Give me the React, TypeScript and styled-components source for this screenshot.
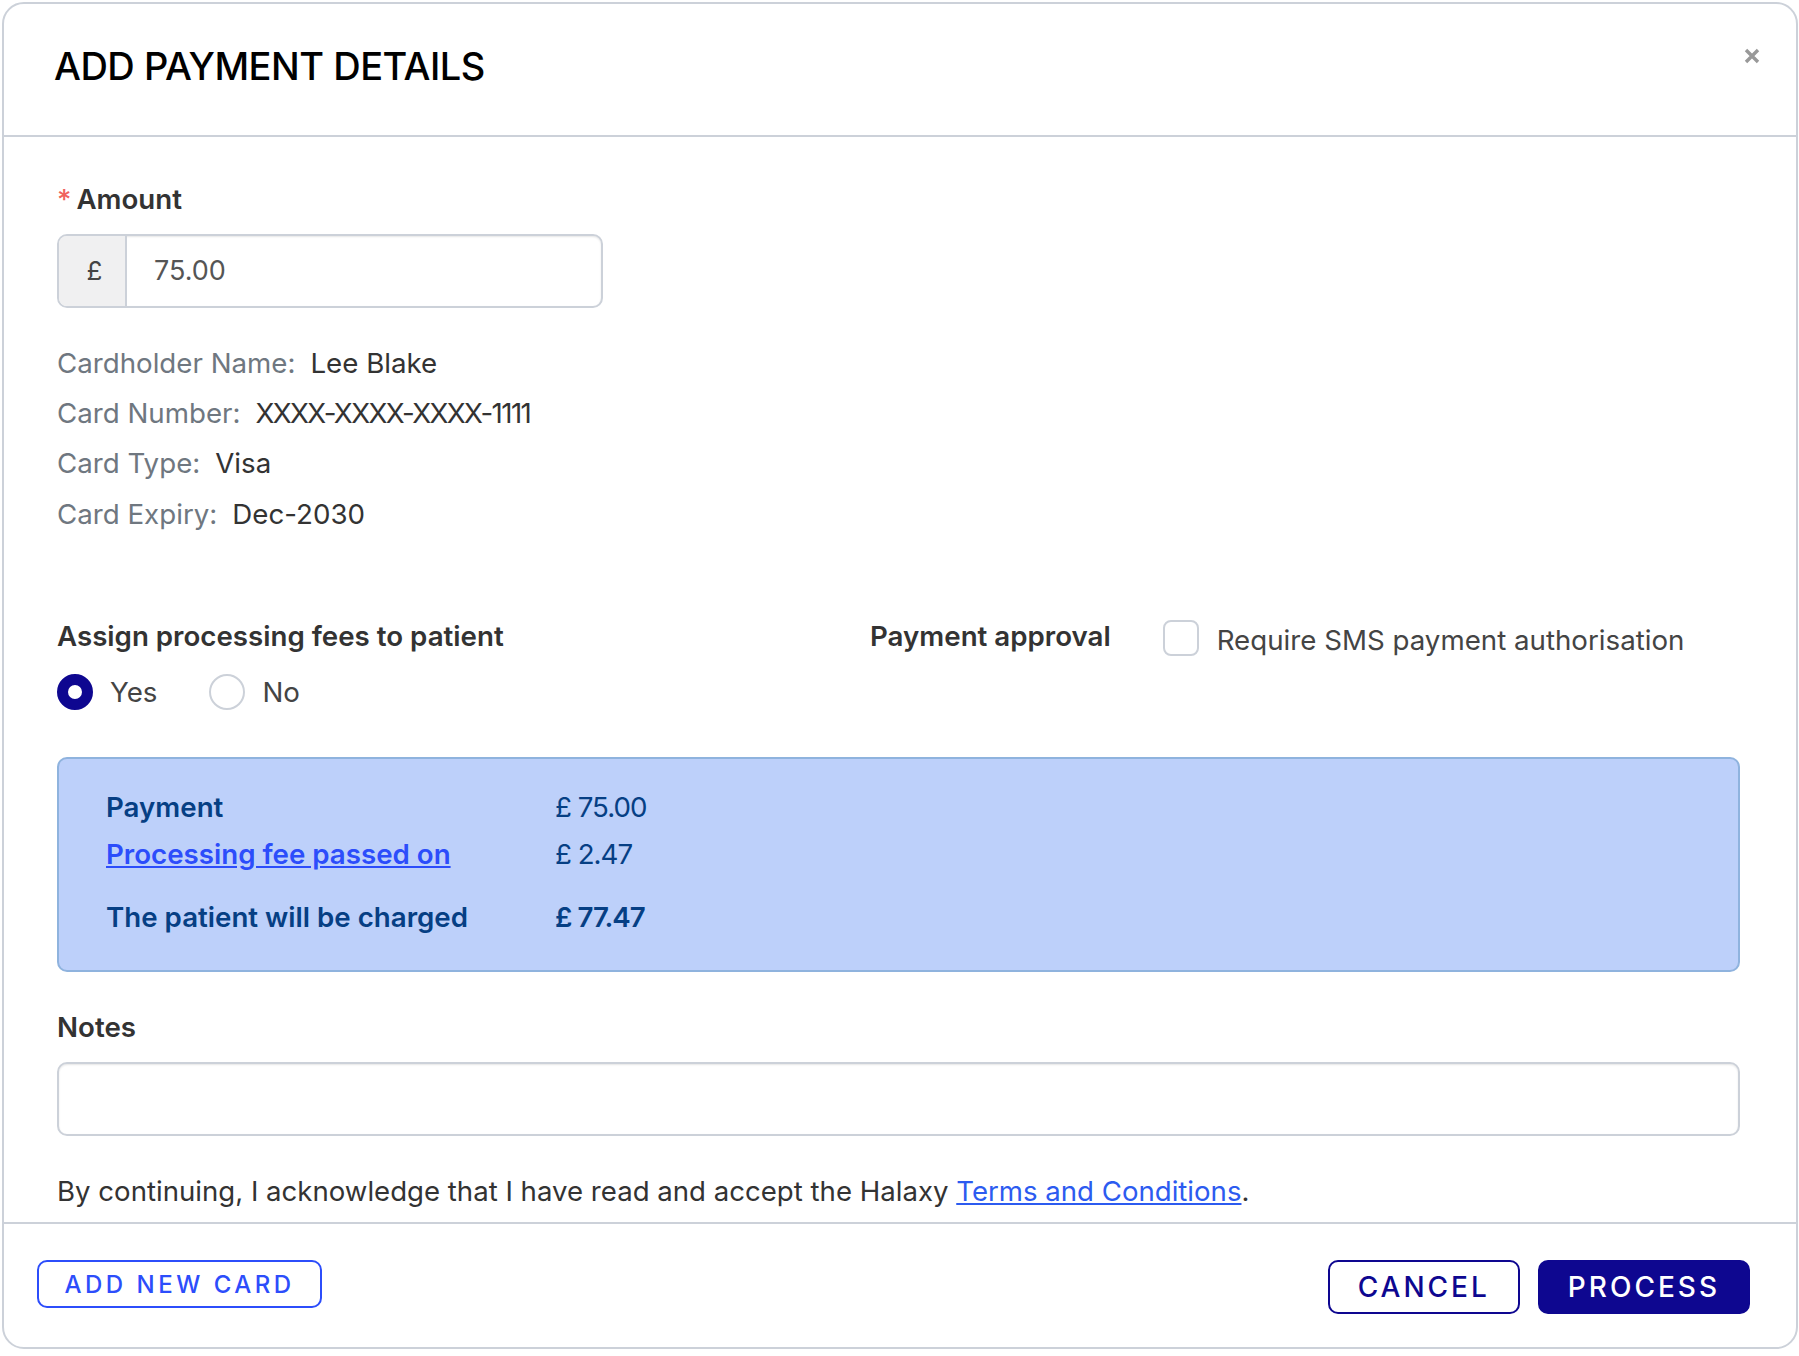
import styled, { createGlobalStyle } from 'styled-components';

const GlobalStyle = createGlobalStyle`
    html, body {
        margin: 0;
        padding: 0;
        background: #fff;
    }

    * {
        box-sizing: border-box;
    }

    body {
        font-family: Inter, "Liberation Sans", sans-serif;
        color: #333;
    }
`;

const Page = styled.div`
    width: 1799px;
    height: 1356px;
    padding: 2px;
`;

const Modal = styled.div`
    display: flex;
    flex-direction: column;
    position: relative;
    width: 1796px;
    height: 1347px;
    border: 2px solid #ccd1d9;
    border-radius: 22px;
    background: #fff;
`;

const Header = styled.header`
    display: flex;
    align-items: center;
    height: 133px;
    padding: 0 50px;
    border-bottom: 2px solid #ccd1d9;
`;

const Title = styled.h1`
    margin: 0 0 7px;
    color: #000;
    font-size: 38px;
    font-weight: 500;
    letter-spacing: -0.5px;
`;

const CloseButton = styled.button`
    position: absolute;
    top: 44px;
    right: 36px;
    display: flex;
    padding: 0;
    border: 0;
    background: none;
    color: #999;
`;

const Body = styled.div`
    flex: 1;
    padding: 45px 56px 0 53px;
`;

const FieldLabel = styled.label`
    display: block;
    font-size: 27.7px;
    line-height: 34px;
    font-weight: 600;
    color: #333;
`;

const Required = styled.span`
    margin-right: 5px;
    color: #f0625d;
    font-weight: 500;
`;

const AmountGroup = styled.div`
    display: flex;
    width: 546px;
    height: 74px;
    margin-top: 18px;
    border: 2px solid #ccd1d9;
    border-radius: 10px;
    box-shadow: inset 0 1px 2px rgba(0, 0, 0, 0.1);
    overflow: hidden;
`;

const AmountAddon = styled.div`
    display: flex;
    align-items: center;
    justify-content: center;
    width: 68px;
    padding: 0 0 2px 5px;
    border-right: 2px solid #ccd1d9;
    background: #f0f0f1;
    font-size: 26px;
    color: #444;
`;

const AmountValue = styled.div`
    display: flex;
    align-items: center;
    padding: 0 0 2px 27px;
    font-size: 27px;
    color: #555;
`;

const CardInfo = styled.dl`
    margin: 30px 0 0;
    font-size: 27.7px;
`;

const CardRow = styled.div`
    display: flex;
    gap: 15px;
    height: 50.2px;
    align-items: center;
`;

const CardKey = styled.dt`
    color: #6f7780;
`;

const CardValue = styled.dd<{ $masked?: boolean }>`
    margin: 0;
    color: #333;
    ${p => p.$masked && 'letter-spacing: -1.6px;'}
`;

const OptionsRow = styled.div`
    display: grid;
    grid-template-columns: 813px 1fr;
    margin-top: 80px;
`;

const RadioRow = styled.div`
    display: flex;
    align-items: center;
    margin-top: 21px;
    height: 36px;
`;

const RadioLabel = styled.label`
    display: flex;
    align-items: center;
    gap: 17px;
    margin-right: 52px;
    font-size: 27.7px;
    color: #444;
`;

const Radio = styled.span<{ $checked?: boolean }>`
    width: 36px;
    height: 36px;
    border-radius: 50%;
    border: ${p => (p.$checked ? '11px solid #0e0790' : '2px solid #ccd1d9')};
    background: #fff;
`;

const ApprovalRow = styled.div`
    display: flex;
    align-items: flex-start;
`;

const Checkbox = styled.span`
    width: 36px;
    height: 36px;
    margin: 1px 0 0 52px;
    border: 2px solid #ccd1d9;
    border-radius: 8px;
    background: #fff;
`;

const CheckLabel = styled.span`
    margin-left: 18px;
    font-size: 27.7px;
    line-height: 42px;
    color: #444;
`;

const Summary = styled.div`
    display: grid;
    grid-template-columns: 449px 1fr;
    grid-auto-rows: 46.5px;
    align-items: center;
    height: 215px;
    margin-top: 47px;
    padding: 25px 47px 0;
    border: 2px solid #8fb3de;
    border-radius: 10px;
    background: #bdd0fa;
    color: #063f84;
    font-size: 27.7px;
`;

const SummaryLabel = styled.div<{ $total?: boolean }>`
    font-weight: 600;
    ${p => p.$total && 'margin-top: 34px;'}
`;

const SummaryValue = styled.div<{ $total?: boolean }>`
    letter-spacing: -1px;
    ${p => p.$total && 'margin-top: 34px; font-weight: 600;'}
`;

const SummaryLink = styled.a`
    color: #2c4dfb;
    text-decoration: underline;
`;

const NotesLabel = styled(FieldLabel)`
    margin-top: 38px;
`;

const NotesInput = styled.div`
    height: 74px;
    margin-top: 18px;
    border: 2px solid #ccd1d9;
    border-radius: 10px;
    box-shadow: inset 0 1px 2px rgba(0, 0, 0, 0.1);
`;

const Terms = styled.p`
    margin: 38px 0 0;
    font-size: 27.6px;
    line-height: 34px;
    color: #333;
`;

const TermsLink = styled.a`
    color: #2c5bf0;
    text-decoration: underline;
`;

const Footer = styled.footer`
    display: flex;
    align-items: flex-start;
    justify-content: space-between;
    height: 125px;
    padding: 36px 46px 0 33px;
    border-top: 2px solid #ccd1d9;
`;

const Actions = styled.div`
    display: flex;
    gap: 18px;
`;

const Button = styled.button<{ $variant: 'link' | 'outline' | 'solid' }>`
    height: ${p => (p.$variant === 'link' ? '48px' : '54px')};
    padding: 0 ${p => (p.$variant === 'link' ? '25.5px' : '28px')};
    border-radius: 10px;
    border: 2px solid ${p => (p.$variant === 'link' ? '#2c4dfb' : '#0e0790')};
    background: ${p => (p.$variant === 'solid' ? '#0e0790' : '#fff')};
    color: ${p =>
        p.$variant === 'link'
            ? '#2c4dfb'
            : p.$variant === 'solid'
              ? '#fff'
              : '#0e0790'};
    font-family: inherit;
    font-size: ${p => (p.$variant === 'link' ? '24px' : '28px')};
    font-weight: 500;
    letter-spacing: ${p => (p.$variant === 'link' ? '3.5px' : '3px')};
`;

export default function App() {
    return (
        <Page>
            <GlobalStyle />
            <Modal>
                <Header>
                    <Title>ADD PAYMENT DETAILS</Title>
                    <CloseButton aria-label="Close">
                        <svg width="16" height="16" viewBox="0 0 16 16">
                            <path
                                d="M2 2l12 12M14 2L2 14"
                                stroke="currentColor"
                                strokeWidth="3.4"
                            />
                        </svg>
                    </CloseButton>
                </Header>
                <Body>
                    <FieldLabel>
                        <Required>*</Required>Amount
                    </FieldLabel>
                    <AmountGroup>
                        <AmountAddon>£</AmountAddon>
                        <AmountValue>75.00</AmountValue>
                    </AmountGroup>
                    <CardInfo>
                        <CardRow>
                            <CardKey>Cardholder Name:</CardKey>
                            <CardValue>Lee Blake</CardValue>
                        </CardRow>
                        <CardRow>
                            <CardKey>Card Number:</CardKey>
                            <CardValue $masked>XXXX-XXXX-XXXX-1111</CardValue>
                        </CardRow>
                        <CardRow>
                            <CardKey>Card Type:</CardKey>
                            <CardValue>Visa</CardValue>
                        </CardRow>
                        <CardRow>
                            <CardKey>Card Expiry:</CardKey>
                            <CardValue>Dec-2030</CardValue>
                        </CardRow>
                    </CardInfo>
                    <OptionsRow>
                        <div>
                            <FieldLabel>Assign processing fees to patient</FieldLabel>
                            <RadioRow>
                                <RadioLabel>
                                    <Radio $checked />
                                    Yes
                                </RadioLabel>
                                <RadioLabel>
                                    <Radio />
                                    No
                                </RadioLabel>
                            </RadioRow>
                        </div>
                        <ApprovalRow>
                            <FieldLabel>Payment approval</FieldLabel>
                            <Checkbox />
                            <CheckLabel>Require SMS payment authorisation</CheckLabel>
                        </ApprovalRow>
                    </OptionsRow>
                    <Summary>
                        <SummaryLabel>Payment</SummaryLabel>
                        <SummaryValue>£ 75.00</SummaryValue>
                        <SummaryLabel>
                            <SummaryLink>Processing fee passed on</SummaryLink>
                        </SummaryLabel>
                        <SummaryValue>£ 2.47</SummaryValue>
                        <SummaryLabel $total>The patient will be charged</SummaryLabel>
                        <SummaryValue $total>£ 77.47</SummaryValue>
                    </Summary>
                    <NotesLabel>Notes</NotesLabel>
                    <NotesInput />
                    <Terms>
                        By continuing, I acknowledge that I have read and accept the Halaxy{' '}
                        <TermsLink>Terms and Conditions</TermsLink>.
                    </Terms>
                </Body>
                <Footer>
                    <Button $variant="link">ADD NEW CARD</Button>
                    <Actions>
                        <Button $variant="outline">CANCEL</Button>
                        <Button $variant="solid">PROCESS</Button>
                    </Actions>
                </Footer>
            </Modal>
        </Page>
    );
}
